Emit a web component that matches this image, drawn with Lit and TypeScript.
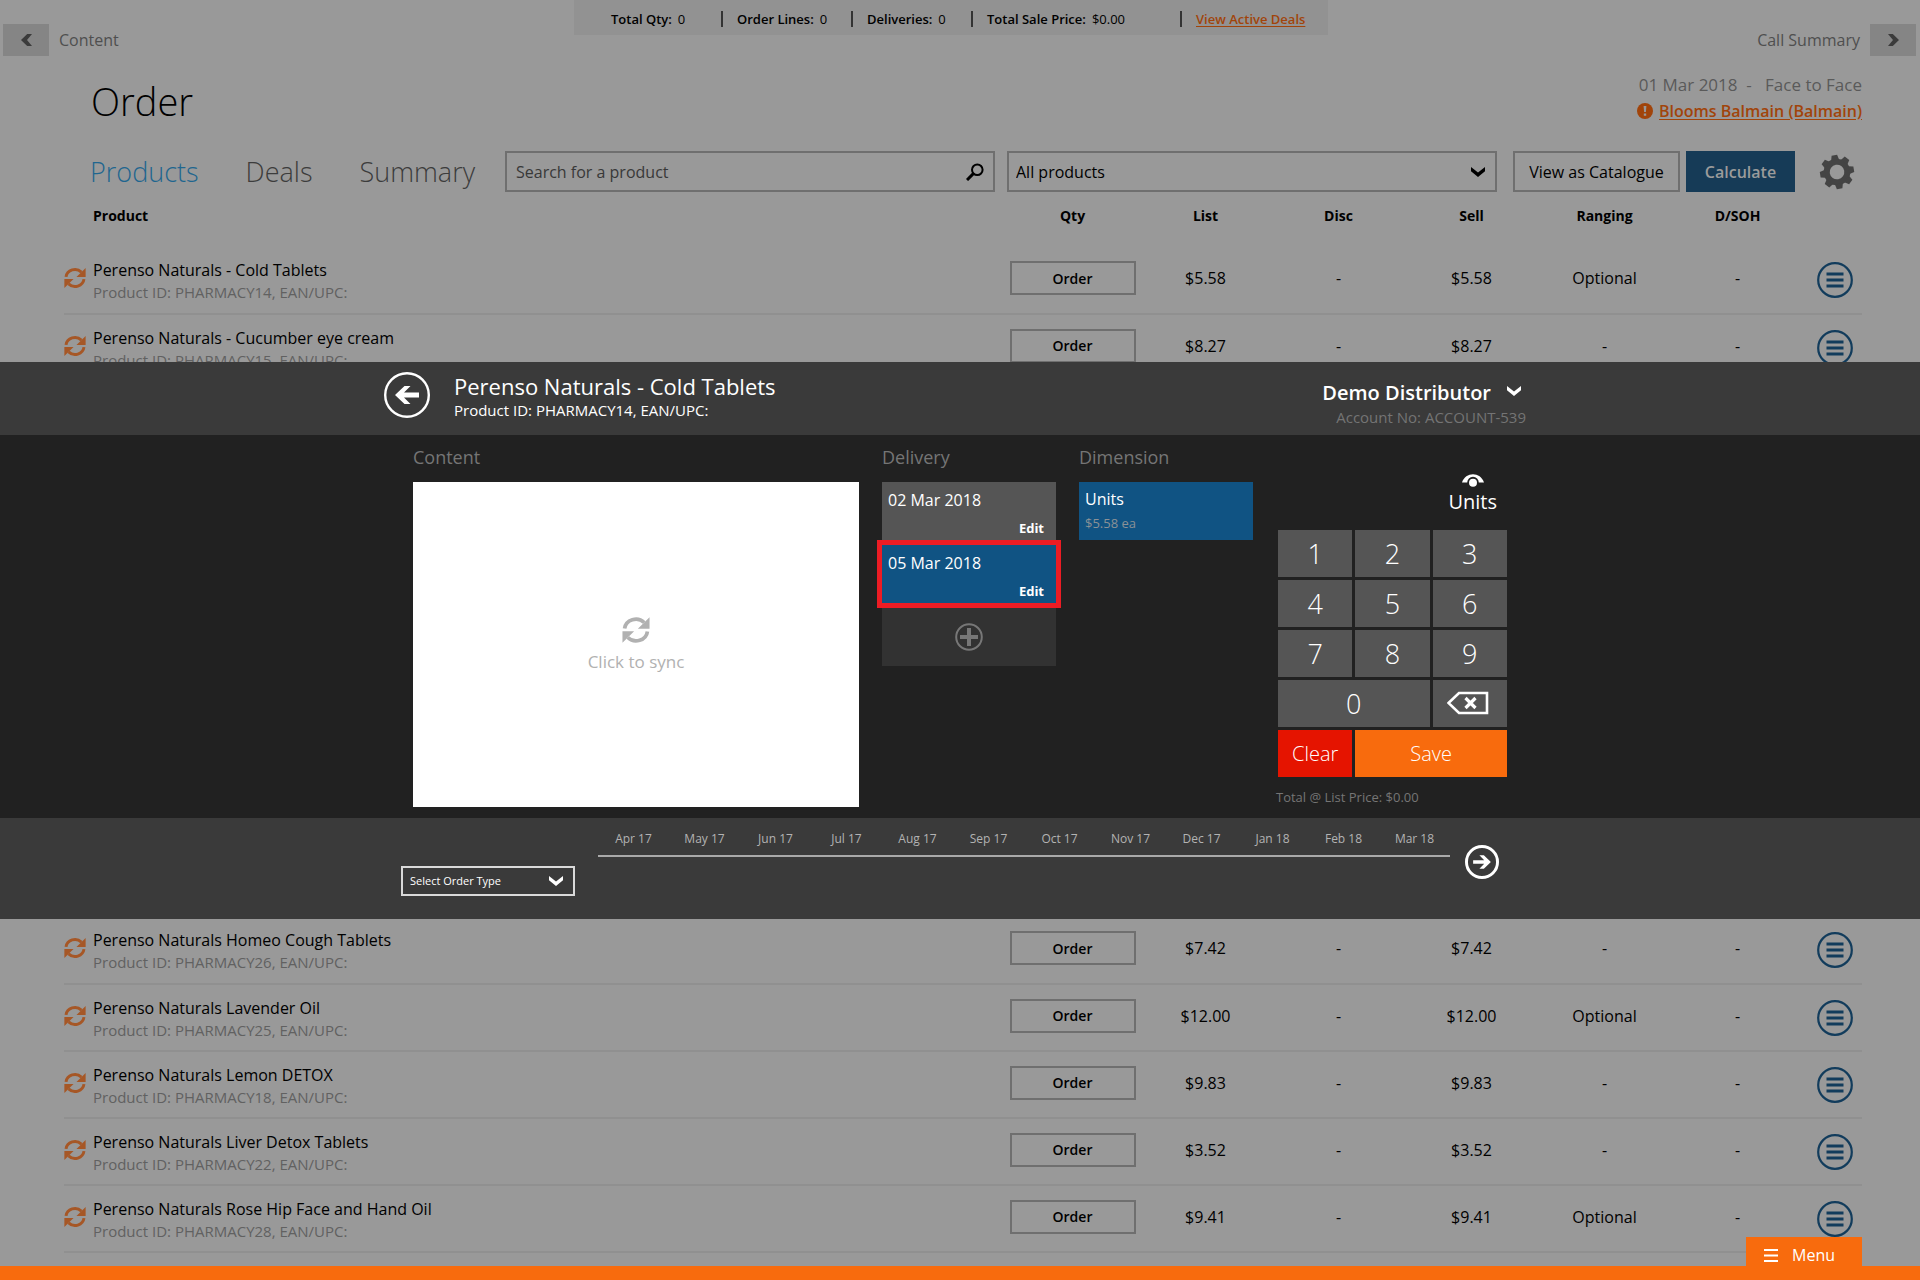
import { LitElement, html, css, svg, nothing } from "lit";
import { customElement, property } from "lit/decorators.js";

interface Product {
  name: string;
  id: string;
  price: string;
  ranging: string;
}

const ABOVE: Product[] = [
  { name: "Perenso Naturals - Cold Tablets", id: "PHARMACY14", price: "$5.58", ranging: "Optional" },
  { name: "Perenso Naturals - Cucumber eye cream", id: "PHARMACY15", price: "$8.27", ranging: "-" },
];

const BELOW: Product[] = [
  { name: "Perenso Naturals Homeo Cough Tablets", id: "PHARMACY26", price: "$7.42", ranging: "-" },
  { name: "Perenso Naturals Lavender Oil", id: "PHARMACY25", price: "$12.00", ranging: "Optional" },
  { name: "Perenso Naturals Lemon DETOX", id: "PHARMACY18", price: "$9.83", ranging: "-" },
  { name: "Perenso Naturals Liver Detox Tablets", id: "PHARMACY22", price: "$3.52", ranging: "-" },
  { name: "Perenso Naturals Rose Hip Face and Hand Oil", id: "PHARMACY28", price: "$9.41", ranging: "Optional" },
];

const MONTHS = [
  "Apr 17", "May 17", "Jun 17", "Jul 17", "Aug 17", "Sep 17",
  "Oct 17", "Nov 17", "Dec 17", "Jan 18", "Feb 18", "Mar 18",
];

const syncIcon = (size: number) => html`
  <svg width=${size} height=${size} viewBox="0 0 24 24" aria-hidden="true">
    <g fill="none" stroke="currentColor" stroke-width="3.2">
      <path d="M2.2 10.8A9.8 9.2 0 0 1 19 5.6" />
      <path d="M21.8 13.2A9.8 9.2 0 0 1 5 18.4" />
    </g>
    <path fill="currentColor" d="M23.6 1v10H13.6zM.4 23V13h10z" />
  </svg>`;

const chevron = html`
  <svg class="chevron" width="14" height="10" viewBox="0 0 14 10" aria-hidden="true">
    <path d="M0 0l7 5.4L14 0v4.2L7 10 0 4.2z" fill="currentColor" />
  </svg>`;

const circleArrow = (size: number, flip: boolean, stroke: number) => html`
  <svg width=${size} height=${size} viewBox="0 0 46 46" aria-hidden="true">
    <circle cx="23" cy="23" r=${23 - stroke / 2} fill="none" stroke="currentColor" stroke-width=${stroke} />
    <path
      fill="currentColor"
      transform=${flip ? "translate(46 0) scale(-1 1)" : nothing}
      d="M11 23l9.500-9h6l-6.500 6.500H35v5H20l6.500 6.500h-6z"
    />
  </svg>`;

const gearIcon = html`
  <svg width="36" height="36" viewBox="-18 -18 36 36" aria-hidden="true">
    <g transform="rotate(-9)">
      <circle r="10.300" fill="none" stroke="currentColor" stroke-width="6" />
      ${[0, 45, 90, 135, 180, 225, 270, 315].map(
        (a) => svg`<path d="M-4 -12L-2.800 -17H2.800L4 -12z" fill="currentColor" transform="rotate(${a})" />`
      )}
    </g>
  </svg>`;

const base = css`
  * {
    box-sizing: border-box;
  }
  button,
  input,
  select {
    font: inherit;
    color: inherit;
    margin: 0;
    padding: 0;
    border: 0;
    border-radius: 0;
    background: none;
  }
  h1,
  h2,
  h3,
  p,
  ol,
  ul {
    margin: 0;
    padding: 0;
    font-weight: inherit;
    list-style: none;
  }
  svg {
    display: block;
    flex: none;
  }
  .select {
    position: relative;
    display: flex;
    align-items: center;
  }
  .select select {
    appearance: none;
    width: 100%;
    height: 100%;
  }
  .select .chevron {
    position: absolute;
    pointer-events: none;
  }
`;

@customElement("product-table")
class ProductTable extends LitElement {
  static styles = [
    base,
    css`
      :host {
        display: block;
      }
      table {
        width: 100%;
        border-collapse: collapse;
        table-layout: fixed;
      }
      th {
        height: 55px;
        padding: 0 0 8px;
        font-size: 14px;
        line-height: 20px;
        font-weight: 700;
      }
      .name {
        text-align: left;
      }
      th.name {
        padding-left: 29px;
      }
      .value {
        width: 133px;
      }
      .more {
        width: 58px;
      }
      .row td {
        height: 67px;
        padding: 0 0 4px;
        border-bottom: 2px solid #909090;
        text-align: center;
      }
      .covered td {
        height: 536px;
        padding: 0;
      }
      .product {
        display: grid;
        grid-template-columns: 29px 1fr;
        align-items: center;
        text-align: left;
      }
      .sync {
        color: #a65726;
      }
      .text {
        padding-top: 6px;
        line-height: 22px;
      }
      .sub {
        font-size: 15px;
        color: #616161;
      }
      .order {
        display: block;
        width: 126px;
        height: 34px;
        margin: 0 auto;
        border: 2px solid #6f6f6f;
        font-size: 14px;
        font-weight: 600;
      }
      .menu {
        display: block;
        margin: 4px 0 0 13px;
        color: #123c5c;
      }
    `,
  ];

  private row(p: Product) {
    return html`
      <tr class="row">
        <td>
          <div class="product">
            <span class="sync">${syncIcon(22)}</span>
            <div class="text">
              <div>${p.name}</div>
              <div class="sub">Product ID: ${p.id}, EAN/UPC:</div>
            </div>
          </div>
        </td>
        <td><button class="order">Order</button></td>
        <td>${p.price}</td>
        <td>-</td>
        <td>${p.price}</td>
        <td>${p.ranging}</td>
        <td>-</td>
        <td>
          <button class="menu" aria-label="More">
            <svg width="36" height="36" viewBox="0 0 36 36" aria-hidden="true">
              <circle cx="18" cy="18" r="16.800" fill="none" stroke="currentColor" stroke-width="2.200" />
              <path d="M9.500 12h17M9.500 18h17M9.500 24h17" stroke="currentColor" stroke-width="2.800" />
            </svg>
          </button>
        </td>
      </tr>`;
  }

  render() {
    return html`
      <table>
        <thead>
          <tr>
            <th class="name">Product</th>
            ${["Qty", "List", "Disc", "Sell", "Ranging", "D/SOH"].map((h) => html`<th class="value">${h}</th>`)}
            <th class="more"></th>
          </tr>
        </thead>
        <tbody>
          ${ABOVE.map((p) => this.row(p))}
        </tbody>
        <tbody>
          <tr class="covered">
            <td colspan="8"></td>
          </tr>
        </tbody>
        <tbody>
          ${BELOW.map((p) => this.row(p))}
        </tbody>
      </table>`;
  }
}

@customElement("key-pad")
class KeyPad extends LitElement {
  static styles = [
    base,
    css`
      :host {
        display: block;
      }
      .display {
        display: flex;
        flex-direction: column;
        align-items: center;
        width: max-content;
        margin-left: auto;
        padding: 39px 10px 13px 0;
        font-size: 20px;
        line-height: 30px;
      }
      .keys {
        display: grid;
        grid-template-columns: repeat(3, 1fr);
        grid-auto-rows: 47px;
        gap: 3px;
      }
      button {
        display: flex;
        align-items: center;
        justify-content: center;
        background: #555;
        font-size: 27px;
        font-weight: 300;
      }
      .wide {
        grid-column: span 2;
      }
      .clear,
      .save {
        font-size: 20px;
      }
      .clear {
        background: #e51400;
      }
      .save {
        background: #f86b0d;
      }
      .total {
        margin: 10px 0 0 -2px;
        font-size: 13px;
        line-height: 20px;
        color: #757575;
      }
    `,
  ];

  render() {
    return html`
      <div class="display">
        <svg width="22" height="13" viewBox="0 0 22 13" aria-hidden="true">
          <path d="M0 8.500C3.500-2.500 18.500-2.500 22 8.500H16.800A5.800 5.800 0 0 0 5.200 8.500z" fill="currentColor" />
          <circle cx="11" cy="8.800" r="4" fill="currentColor" />
        </svg>
        <span>Units</span>
      </div>
      <div class="keys">
        ${[1, 2, 3, 4, 5, 6, 7, 8, 9].map((n) => html`<button>${n}</button>`)}
        <button class="wide">0</button>
        <button aria-label="Backspace">
          <svg width="46" height="24" viewBox="0 0 46 24" aria-hidden="true">
            <path d="M1.500 12L12 2h28v20H12z" fill="none" stroke="currentColor" stroke-width="2.600" />
            <path d="M18.500 7l10 10M28.500 7l-10 10" stroke="currentColor" stroke-width="3.200" />
          </svg>
        </button>
        <button class="clear">Clear</button>
        <button class="save wide">Save</button>
      </div>
      <p class="total">Total @ List Price: $0.00</p>`;
  }
}

@customElement("delivery-tile")
class DeliveryTile extends LitElement {
  @property() date = "";
  @property({ type: Boolean, reflect: true }) selected = false;

  static styles = [
    base,
    css`
      :host {
        display: flex;
        flex-direction: column;
        justify-content: space-between;
        height: 58px;
        padding: 6px 12px 1px 6px;
        background: #555;
      }
      :host([selected]) {
        background: #105383;
        outline: 5px solid #ed1c24;
      }
      .date {
        line-height: 24px;
      }
      .edit {
        align-self: flex-end;
        font-size: 13px;
        line-height: 22px;
        font-weight: 700;
      }
    `,
  ];

  render() {
    return html`
      <span class="date">${this.date}</span>
      <button class="edit">Edit</button>`;
  }
}

@customElement("order-dialog")
class OrderDialog extends LitElement {
  static styles = [
    base,
    css`
      :host {
        display: block;
        width: 100%;
        color: #fff;
        background: #212121;
      }
      .band {
        background: #3a3a3a;
      }
      .inner {
        max-width: 1152px;
        margin: 0 auto;
      }
      .head {
        display: flex;
        height: 73px;
        padding: 10px 10px 0 0;
      }
      .back {
        align-self: flex-start;
      }
      .heading {
        flex: 1;
        padding-left: 24px;
      }
      .heading h2 {
        font-size: 22px;
        line-height: 28px;
      }
      .heading p {
        font-size: 15px;
        line-height: 20px;
      }
      .distributor {
        padding-top: 6px;
        text-align: right;
      }
      .choose {
        display: flex;
        align-items: center;
        gap: 16px;
        margin: 0 5px 0 auto;
        font-size: 20px;
        line-height: 30px;
        font-weight: 600;
      }
      .choose .chevron {
        margin-bottom: 4px;
      }
      .account {
        font-size: 15px;
        line-height: 18px;
        color: #747474;
      }
      .body {
        display: grid;
        grid-template-columns: 446px 174px 174px 229px;
        column-gap: 23px;
        min-height: 383px;
        padding: 0 29px;
      }
      .body key-pad {
        margin-left: 2px;
        margin-right: -2px;
      }
      h3 {
        height: 47px;
        padding-top: 10px;
        font-size: 18px;
        line-height: 24px;
        color: #757575;
      }
      .content {
        display: flex;
        flex-direction: column;
        align-items: center;
        justify-content: center;
        gap: 6px;
        width: 100%;
        height: 325px;
        padding-top: 2px;
        background: #fff;
        color: #b1b1b1;
      }
      .content span {
        font-size: 17px;
        line-height: 24px;
      }
      .tiles {
        display: flex;
        flex-direction: column;
        gap: 5px;
      }
      .add {
        display: flex;
        align-items: center;
        justify-content: center;
        height: 58px;
        background: #323232;
        color: #777;
      }
      .unit {
        display: block;
        width: 100%;
        height: 58px;
        padding: 0 6px;
        background: #105383;
        text-align: left;
        line-height: 24px;
      }
      .unit small {
        display: block;
        font-size: 13px;
        color: #8b9196;
      }
      .foot {
        display: grid;
        grid-template-columns: 174px 852px auto;
        height: 101px;
        padding: 0 17px;
      }
      .type {
        height: 30px;
        margin-top: 48px;
      }
      .type select {
        padding-left: 7px;
        border: 2px solid #d9d9d9;
        font-size: 11px;
      }
      .type .chevron {
        right: 12px;
      }
      .months {
        display: grid;
        grid-template-columns: repeat(12, 1fr);
        height: 39px;
        margin: 0 -23px 0 23px;
        padding-top: 11px;
        border-bottom: 2px solid #a9a9a9;
        font-size: 12px;
        line-height: 20px;
        text-align: center;
        color: #b3b3b3;
      }
      .next {
        margin: 27px 0 0 38px;
        align-self: start;
      }
    `,
  ];

  render() {
    return html`
      <div class="band">
        <div class="inner head">
          <button class="back" aria-label="Back">${circleArrow(46, false, 2.4)}</button>
          <div class="heading">
            <h2>Perenso Naturals - Cold Tablets</h2>
            <p>Product ID: PHARMACY14, EAN/UPC:</p>
          </div>
          <div class="distributor">
            <button class="choose">Demo Distributor ${chevron}</button>
            <p class="account">Account No: ACCOUNT-539</p>
          </div>
        </div>
      </div>
      <div class="inner body">
        <section>
          <h3>Content</h3>
          <button class="content">${syncIcon(28)}<span>Click to sync</span></button>
        </section>
        <section>
          <h3>Delivery</h3>
          <div class="tiles">
            <delivery-tile date="02 Mar 2018"></delivery-tile>
            <delivery-tile date="05 Mar 2018" selected></delivery-tile>
            <button class="add" aria-label="Add delivery">
              <svg width="28" height="28" viewBox="0 0 28 28" aria-hidden="true">
                <circle cx="14" cy="14" r="12.800" fill="none" stroke="currentColor" stroke-width="2" />
                <path d="M14 5v18M5 14h18" stroke="currentColor" stroke-width="4" />
              </svg>
            </button>
          </div>
        </section>
        <section>
          <h3>Dimension</h3>
          <button class="unit">Units<small>$5.58 ea</small></button>
        </section>
        <key-pad></key-pad>
      </div>
      <div class="band">
        <div class="inner foot">
          <div class="select type">
            <select aria-label="Order type">
              <option>Select Order Type</option>
            </select>
            ${chevron}
          </div>
          <ol class="months">
            ${MONTHS.map((m) => html`<li>${m}</li>`)}
          </ol>
          <button class="next" aria-label="Next">${circleArrow(34, true, 4)}</button>
        </div>
      </div>`;
  }
}

@customElement("app-root")
class AppRoot extends LitElement {
  static styles = [
    base,
    css`
      :host {
        display: block;
        position: relative;
        min-height: 100vh;
        overflow: hidden;
        background: #999;
        color: #000;
        font-family: "Open Sans", "Noto Sans", "Liberation Sans", sans-serif;
        font-size: 16px;
      }
      .top {
        display: grid;
        grid-template-columns: minmax(0, 571fr) 754px minmax(0, 588fr);
        height: 66px;
        padding: 0 4px 0 3px;
        color: #4f4f4f;
      }
      .nav {
        display: flex;
        align-items: center;
        gap: 10px;
        height: 32px;
        margin-top: 24px;
      }
      .nav.right {
        justify-content: flex-end;
      }
      .nav button {
        display: flex;
        align-items: center;
        justify-content: center;
        width: 46px;
        height: 32px;
        background: #858585;
        color: #3b3b3b;
      }
      .stats {
        display: grid;
        grid-template-columns: 110px 130px 120px 209px auto;
        align-items: center;
        height: 35px;
        padding: 3px 0 0 37px;
        background: #929292;
        color: #000;
        font-size: 13px;
      }
      .stats li {
        display: flex;
        gap: 6px;
        white-space: nowrap;
        padding-left: 14px;
        border-left: 2px solid #333;
        line-height: 16px;
      }
      .stats li:first-child {
        padding-left: 0;
        border: 0;
      }
      .stats b {
        font-weight: 600;
      }
      a {
        color: #a1440a;
        font-weight: 600;
        text-underline-offset: 2px;
      }
      .page {
        padding: 0 58px 0 64px;
      }
      .title-row {
        display: flex;
        justify-content: space-between;
        padding-left: 27px;
      }
      h1 {
        font-size: 38px;
        line-height: 70px;
        font-weight: 300;
      }
      .visit {
        padding-top: 6px;
        text-align: right;
        line-height: 26px;
        color: #5a5a5a;
      }
      .when {
        font-size: 17px;
        white-space: pre;
      }
      .customer {
        display: flex;
        align-items: center;
        justify-content: flex-end;
        gap: 6px;
        color: #a1440a;
      }
      .tools {
        display: flex;
        align-items: center;
        height: 41px;
        margin-top: 15px;
        padding: 0 7px 0 26px;
      }
      .tabs {
        display: flex;
        gap: 47px;
        width: 415px;
        font-size: 27px;
        line-height: 41px;
        font-weight: 300;
        color: #3c3c3c;
      }
      .tabs button[aria-selected="true"] {
        color: #1f668f;
      }
      .field {
        flex: 1 1 0;
        height: 41px;
        border: 2px solid #6f6f6f;
      }
      .search {
        display: flex;
        align-items: center;
        margin-right: 12px;
      }
      .search input {
        flex: 1;
        min-width: 0;
        padding-left: 9px;
        outline: 0;
      }
      .search svg {
        margin-right: 9px;
      }
      .search input::placeholder {
        color: #383838;
        opacity: 1;
      }
      .filter {
        margin-right: 16px;
      }
      .filter select {
        padding-left: 7px;
      }
      .filter .chevron {
        right: 10px;
      }
      .catalogue {
        width: 167px;
        height: 41px;
        margin-right: 6px;
        border: 2px solid #6f6f6f;
      }
      .calculate {
        width: 109px;
        height: 41px;
        margin-right: 24px;
        background: #163b57;
        color: #9b9b9b;
        font-weight: 600;
      }
      .gear {
        color: #444;
      }
      .overlay {
        position: absolute;
        inset: 0;
        display: flex;
        align-items: center;
      }
      .taskbar {
        position: absolute;
        inset: auto 0 0;
        display: flex;
        justify-content: flex-end;
        align-items: flex-end;
        padding: 0 58px 14px 0;
        background: linear-gradient(#f86b0d, #f86b0d) bottom / 100% 14px no-repeat;
      }
      .menu {
        display: flex;
        align-items: center;
        gap: 14px;
        width: 116px;
        height: 29px;
        padding: 7px 0 0 18px;
        background: #f86b0d;
        color: #fff;
      }
    `,
  ];

  render() {
    return html`
      <header class="top">
        <nav class="nav">
          <button aria-label="Previous">
            <svg width="11" height="12" viewBox="0 0 11 12" aria-hidden="true">
              <path d="M6.200 0H11L6 6l5 6H6.200L0 6z" fill="currentColor" />
            </svg>
          </button>
          <span>Content</span>
        </nav>
        <ul class="stats">
          <li><b>Total Qty:</b><span>0</span></li>
          <li><b>Order Lines:</b><span>0</span></li>
          <li><b>Deliveries:</b><span>0</span></li>
          <li><b>Total Sale Price:</b><span>$0.00</span></li>
          <li><a href="#deals">View Active Deals</a></li>
        </ul>
        <nav class="nav right">
          <span>Call Summary</span>
          <button aria-label="Next">
            <svg width="11" height="12" viewBox="0 0 11 12" aria-hidden="true">
              <path d="M4.800 0H0l5 6-5 6h4.800L11 6z" fill="currentColor" />
            </svg>
          </button>
        </nav>
      </header>

      <main class="page">
        <div class="title-row">
          <h1>Order</h1>
          <div class="visit">
            <div class="when">01 Mar 2018  -   Face to Face</div>
            <div class="customer">
              <svg width="16" height="16" viewBox="0 0 16 16" aria-hidden="true">
                <circle cx="8" cy="8" r="8" fill="currentColor" />
                <path d="M6.600 3h2.800l-.5 6H7.100zM6.800 10.400h2.400v2.300H6.800z" fill="#999" />
              </svg>
              <a href="#customer">Blooms Balmain (Balmain)</a>
            </div>
          </div>
        </div>

        <div class="tools">
          <div class="tabs" role="tablist">
            <button role="tab" aria-selected="true">Products</button>
            <button role="tab" aria-selected="false">Deals</button>
            <button role="tab" aria-selected="false">Summary</button>
          </div>
          <label class="field search">
            <input type="text" placeholder="Search for a product" aria-label="Search for a product" />
            <svg width="18" height="18" viewBox="0 0 18 18" aria-hidden="true">
              <circle cx="11.300" cy="6.700" r="5.300" fill="none" stroke="currentColor" stroke-width="2" />
              <path d="M7.600 10.400L1 17" stroke="currentColor" stroke-width="3" />
            </svg>
          </label>
          <div class="select field filter">
            <select aria-label="Product filter">
              <option>All products</option>
            </select>
            ${chevron}
          </div>
          <button class="catalogue">View as Catalogue</button>
          <button class="calculate">Calculate</button>
          <button class="gear" aria-label="Settings">${gearIcon}</button>
        </div>

        <product-table></product-table>
      </main>

      <div class="overlay"><order-dialog role="dialog" aria-label="Order product"></order-dialog></div>

      <footer class="taskbar">
        <button class="menu">
          <svg width="14" height="14" viewBox="0 0 14 14" aria-hidden="true">
            <path d="M0 2h14M0 7.500h14M0 13h14" stroke="currentColor" stroke-width="2" />
          </svg>
          Menu
        </button>
      </footer>`;
  }
}
